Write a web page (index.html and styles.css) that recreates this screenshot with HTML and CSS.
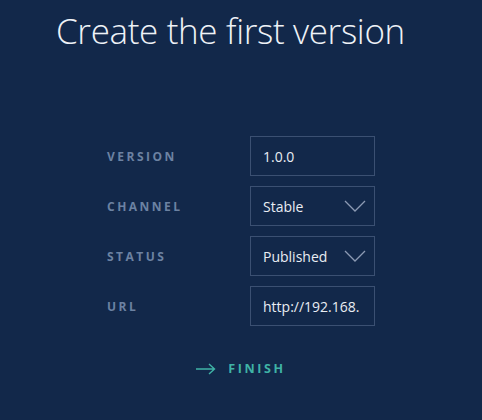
FILE: index.html
```html
<!DOCTYPE html>
<html>
<head>
<meta charset="utf-8">
<link rel="stylesheet" href="styles.css">
</head>
<body>
<div class="page">
  <h1 class="title">Create the first version</h1>
  <div class="form">
    <div class="row">
      <span class="label">VERSION</span>
      <div class="field"><span class="value">1.0.0</span></div>
    </div>
    <div class="row">
      <span class="label">CHANNEL</span>
      <div class="field select"><span class="value">Stable</span>
        <svg class="chev" width="22" height="12" viewBox="0 0 22 12"><path d="M1 1 L11 11 L21 1" fill="none" stroke="#8c9ab3" stroke-width="1.3"/></svg>
      </div>
    </div>
    <div class="row">
      <span class="label">STATUS</span>
      <div class="field select"><span class="value">Published</span>
        <svg class="chev" width="22" height="12" viewBox="0 0 22 12"><path d="M1 1 L11 11 L21 1" fill="none" stroke="#8c9ab3" stroke-width="1.3"/></svg>
      </div>
    </div>
    <div class="row">
      <span class="label">URL</span>
      <div class="field"><span class="value">http://192.168.</span></div>
    </div>
  </div>
  <div class="finish">
    <svg width="20" height="12" viewBox="0 0 20 12"><path d="M0 6 H18 M13 1 L18.5 6 L13 11" fill="none" stroke="#3fb3a6" stroke-width="1.4"/></svg>
    <span>FINISH</span>
  </div>
</div>
</body>
</html>
```
FILE: styles.css
```css
html, body {
  margin: 0;
  padding: 0;
  background: #12284a;
  height: 100%;
}
.page {
  width: 482px;
  height: 420px;
  overflow: hidden;
  font-family: "Open Sans", "Liberation Sans", sans-serif;
}
.title {
  margin: 0;
  padding: 9px 0 0 56px;
  font-weight: 300;
  font-size: 35px;
  line-height: 44px;
  color: #eef2f7;
  letter-spacing: -0.35px;
}
.form {
  margin: 83px auto 0;
  width: 268px;
  display: flex;
  flex-direction: column;
  gap: 10px;
}
.row {
  display: grid;
  grid-template-columns: 143px 125px;
  align-items: center;
  height: 40px;
}
.label {
  font-size: 12px;
  font-weight: 700;
  letter-spacing: 2.5px;
  color: #6c82a2;
}
.field {
  box-sizing: border-box;
  height: 40px;
  border: 1px solid #3b5072;
  display: flex;
  align-items: center;
  padding: 0 8px 0 12px;
  overflow: hidden;
}
.value {
  font-size: 14px;
  color: #e9edf3;
  white-space: nowrap;
}
.select .value {
  flex: 1;
  min-width: 0;
}
.chev {
  flex: none;
  margin-left: 4px;
}
.finish {
  margin-top: 34px;
  display: flex;
  justify-content: center;
  align-items: center;
  gap: 12px;
  color: #3fb3a6;
  font-size: 12.5px;
  font-weight: 700;
  letter-spacing: 2.6px;
}
```
